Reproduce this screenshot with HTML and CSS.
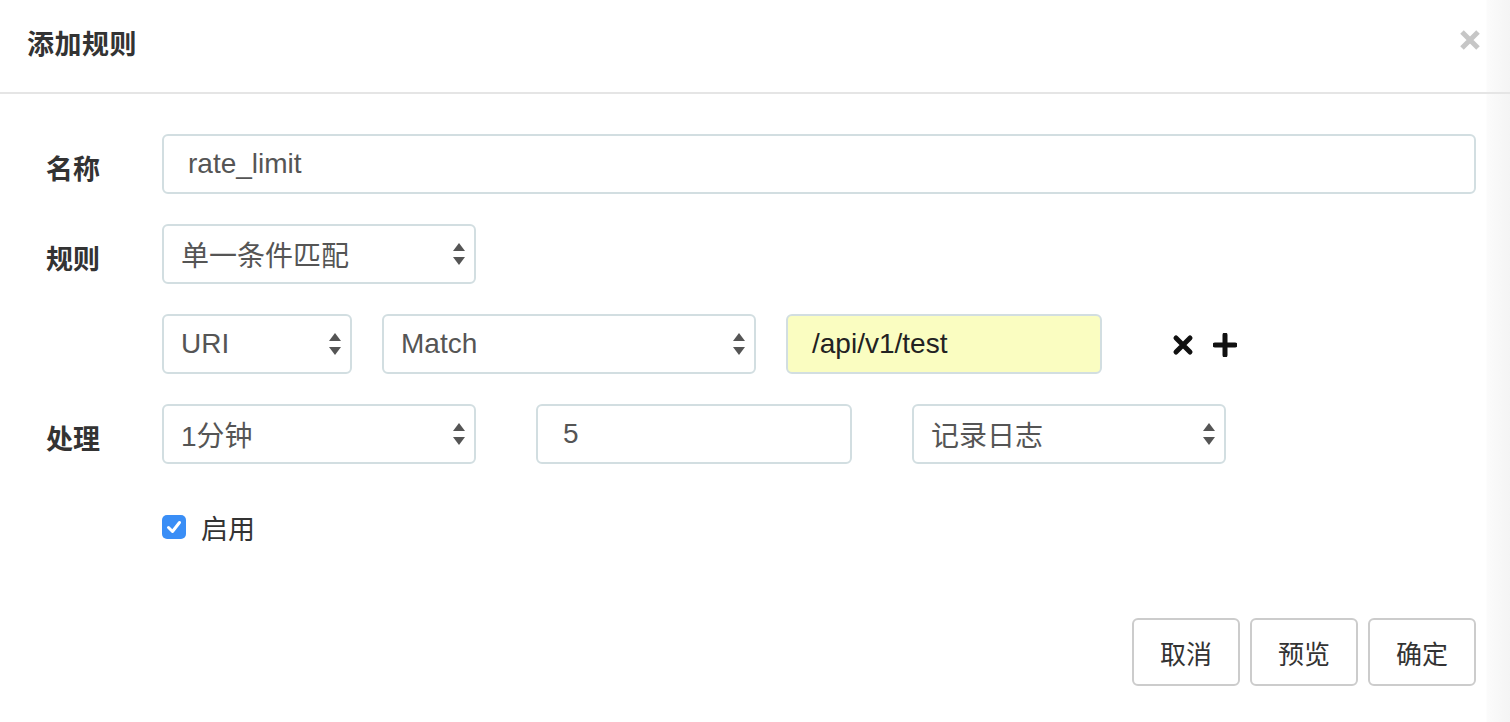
FILE: index.html
```html
<!DOCTYPE html>
<html lang="zh">
<head>
<meta charset="utf-8">
<title>添加规则</title>
<link rel="stylesheet" href="styles.css">
</head>
<body>
<div class="modal">
  <div class="modal-header">
    <h4 class="modal-title">添加规则</h4>
    <span class="close" aria-label="关闭">
      <svg width="22" height="22" viewBox="0 0 22 22"><path d="M3 3 L19 19 M19 3 L3 19" stroke="#c6c6c6" stroke-width="5" stroke-linecap="butt"/></svg>
    </span>
  </div>
  <div class="modal-body">
    <div class="row">
      <label class="label">名称</label>
      <div class="field grow"><div class="input full">rate_limit</div></div>
    </div>
    <div class="row">
      <label class="label">规则</label>
      <div class="field">
        <div class="select w314"><span>单一条件匹配</span><svg class="arrows" width="14" height="28" viewBox="0 0 14 28"><path d="M7 3 L13 11 L1 11 Z M1 17 L13 17 L7 25 Z" fill="#555"/></svg></div>
      </div>
    </div>
    <div class="row">
      <span class="label"></span>
      <div class="field">
        <div class="select w190"><span>URI</span><svg class="arrows" width="14" height="28" viewBox="0 0 14 28"><path d="M7 3 L13 11 L1 11 Z M1 17 L13 17 L7 25 Z" fill="#555"/></svg></div>
        <div class="select w374"><span>Match</span><svg class="arrows" width="14" height="28" viewBox="0 0 14 28"><path d="M7 3 L13 11 L1 11 Z M1 17 L13 17 L7 25 Z" fill="#555"/></svg></div>
        <div class="input w316 yellow">/api/v1/test</div>
        <div class="actions">
          <svg width="22" height="22" viewBox="0 0 22 22"><path d="M4 4 L18 18 M18 4 L4 18" stroke="#111" stroke-width="5" stroke-linecap="round"/></svg>
          <svg width="24" height="24" viewBox="0 0 24 24"><path d="M12 2 V22 M2 12 H22" stroke="#111" stroke-width="5" stroke-linecap="round"/></svg>
        </div>
      </div>
    </div>
    <div class="row">
      <label class="label">处理</label>
      <div class="field wide-gap">
        <div class="select w314"><span>1分钟</span><svg class="arrows" width="14" height="28" viewBox="0 0 14 28"><path d="M7 3 L13 11 L1 11 Z M1 17 L13 17 L7 25 Z" fill="#555"/></svg></div>
        <div class="input w316 num">5</div>
        <div class="select w314"><span>记录日志</span><svg class="arrows" width="14" height="28" viewBox="0 0 14 28"><path d="M7 3 L13 11 L1 11 Z M1 17 L13 17 L7 25 Z" fill="#555"/></svg></div>
      </div>
    </div>
    <div class="row check-row">
      <span class="label"></span>
      <div class="field">
        <span class="checkbox"><svg width="24" height="24" viewBox="0 0 24 24"><path d="M6.5 12.5 L10.5 16.5 L17.5 7.5" stroke="#fff" stroke-width="3" fill="none" stroke-linecap="round" stroke-linejoin="round"/></svg></span>
        <span class="check-label">启用</span>
      </div>
    </div>
  </div>
  <div class="modal-footer">
    <button class="btn">取消</button>
    <button class="btn">预览</button>
    <button class="btn">确定</button>
  </div>
</div>
</body>
</html>
```

FILE: styles.css
```css
html, body {
  margin: 0;
  padding: 0;
}
body {
  width: 1510px;
  height: 722px;
  overflow: hidden;
  background: linear-gradient(to right, #ffffff 0, #ffffff 1486px, #fbfbfb 1487px, #f4f4f4 1510px);
  font-family: "Liberation Sans", "Noto Sans CJK SC", sans-serif;
  color: #555;
}
.modal {
  width: 1510px;
}
.modal-header {
  height: 94px;
  border-bottom: 2px solid #e5e5e5;
  display: flex;
  align-items: center;
  justify-content: space-between;
  padding: 0 29px 0 27px;
  box-sizing: border-box;
}
.modal-title {
  margin: 0;
  font-family: "Noto Sans CJK SC", sans-serif;
  font-size: 27px;
  font-weight: 700;
  color: #333;
  letter-spacing: 0.5px;
  padding-bottom: 8px;
}
.close {
  display: flex;
  padding-bottom: 12px;
}
.modal-body {
  padding: 40px 34px 0 46px;
  display: flex;
  flex-direction: column;
  gap: 30px;
}
.row {
  display: flex;
  align-items: center;
  height: 60px;
}
.label {
  width: 116px;
  flex: none;
  font-family: "Noto Sans CJK SC", sans-serif;
  font-size: 27px;
  font-weight: 700;
  color: #333;
  padding-top: 6px;
}
.field {
  display: flex;
  align-items: center;
  gap: 30px;
  flex: 1;
}
.field.wide-gap { gap: 60px; }
.grow { flex: 1; }
.input, .select {
  height: 60px;
  box-sizing: border-box;
  border: 2px solid #d2dee1;
  border-radius: 6px;
  background: #fff;
  font-size: 28px;
  color: #555;
  display: flex;
  align-items: center;
}
.input {
  padding-left: 24px;
}
.input.full { width: 100%; }
.select {
  padding: 0 8px 0 17px;
  justify-content: space-between;
}
.select span {
  font-family: "Liberation Sans", "Noto Sans CJK SC", sans-serif;
}
.arrows { flex: none; }
.w314 { width: 314px; }
.w190 { width: 190px; }
.w374 { width: 374px; }
.w316 { width: 316px; }
.yellow {
  background: #fafdc1;
  color: #222;
}
.num { padding-left: 25px; }
.actions {
  display: flex;
  align-items: center;
  gap: 19px;
  margin-left: 40px;
  padding-top: 2px;
}
.check-row {
  height: 60px;
  padding-top: 3px;
}
.check-row .field { gap: 15px; }
.checkbox {
  width: 24px;
  height: 24px;
  border-radius: 5px;
  background: #3a8ef6;
  display: flex;
}
.check-label {
  font-family: "Noto Sans CJK SC", sans-serif;
  font-size: 27px;
  color: #333;
}
.modal-footer {
  display: flex;
  justify-content: flex-end;
  gap: 10px;
  padding: 61px 34px 0 0;
}
.btn {
  width: 108px;
  height: 68px;
  border: 2px solid #cccccc;
  border-radius: 6px;
  background: #fff;
  font-family: "Noto Sans CJK SC", sans-serif;
  font-size: 26px;
  color: #333;
  padding: 0;
}
```
